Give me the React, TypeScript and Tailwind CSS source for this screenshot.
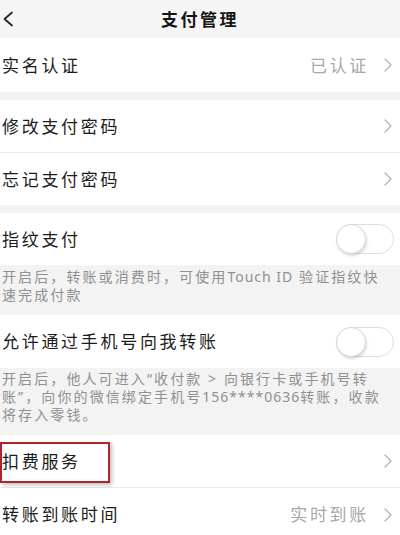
import React from "react";

const Chevron = () => (
  <svg width="8" height="14" viewBox="0 0 8 14" fill="none" className="shrink-0">
    <path d="M1 1 L7 7 L1 13" stroke="#b4b4b4" strokeWidth="1.3" strokeLinecap="round" strokeLinejoin="round" />
  </svg>
);

const Toggle = () => (
  <div className="w-[58px] h-[30px] rounded-full border border-[#dedede] bg-white flex items-center">
    <div className="w-[30px] h-[30px] -ml-px rounded-full bg-white border border-[#d8d8d8] shadow-[1px_2px_3px_rgba(0,0,0,0.15)]" />
  </div>
);

function Row({
  label,
  value,
  chevron = true,
  toggle = false,
  h = "h-[53px]",
  divider = false,
  children,
}: {
  label: string;
  value?: string;
  chevron?: boolean;
  toggle?: boolean;
  h?: string;
  divider?: boolean;
  children?: React.ReactNode;
}) {
  return (
    <div
      className={`${h} relative bg-white flex items-center justify-between pl-[2px] ${toggle ? "pr-[6px]" : "pr-[8px]"} ${divider ? "border-b border-[#e9e9e9]" : ""}`}
    >
      {children}
      <span className="text-[17px] tracking-[2.7px] text-[#1c1c1c] leading-none">{label}</span>
      <div className="flex items-center gap-[15px]">
        {value && <span className="text-[17px] tracking-[2.7px] text-[#a8a8a8] leading-none">{value}</span>}
        {toggle ? <Toggle /> : chevron && <Chevron />}
      </div>
    </div>
  );
}

const Lat = ({ children }: { children: React.ReactNode }) => (
  <span className="tracking-[1px]">{children}</span>
);

export default function App() {
  return (
    <div
      className="w-[400px] h-[535px] overflow-hidden bg-[#f3f3f3]"
      style={{ fontFamily: '"Noto Sans", "Noto Sans CJK SC", sans-serif' }}
    >
      <div className="h-[38px] bg-[#f5f5f5] grid grid-cols-[1fr_auto_1fr] items-center">
        <div className="pl-[2px] flex items-center">
          <svg width="12" height="16" viewBox="0 0 12 16" fill="none">
            <path d="M10 1.5 L2.5 8 L10 14.5" stroke="#222" strokeWidth="1.7" strokeLinecap="round" strokeLinejoin="round" />
          </svg>
        </div>
        <span className="text-[17px] font-bold tracking-[2.5px] text-[#151515] leading-none">支付管理</span>
        <div />
      </div>

      <Row label="实名认证" value="已认证" h="h-[54px]" />
      <div className="h-[8px]" />
      <Row label="修改支付密码" divider />
      <Row label="忘记支付密码" h="h-[52px]" />
      <div className="h-[8px]" />
      <Row label="指纹支付" toggle h="h-[52px]" />
      <div className="h-[50px] pt-[3px] pl-[2px] text-[14px] leading-[18px] tracking-[2.1px] text-[#909090] whitespace-nowrap">
        <div>
          开启后，转账或消费时，可使用<Lat>Touch ID</Lat> 验证指纹快
        </div>
        <div>速完成付款</div>
      </div>
      <Row label="允许通过手机号向我转账" toggle />
      <div className="h-[67px] pt-[2px] pl-[2px] text-[14px] leading-[18px] tracking-[2.1px] text-[#909090] whitespace-nowrap">
        <div>开启后，他人可进入“收付款 &gt; 向银行卡或手机号转</div>
        <div>
          账”，向你的微信绑定手机号<Lat>156****0636</Lat>转账，收款
        </div>
        <div>将存入零钱。</div>
      </div>
      <Row label="扣费服务" divider>
        <div className="absolute left-0 top-[7px] w-[110px] h-[41px] border-2 border-[#b0252b] shadow-[2px_2px_4px_rgba(0,0,0,0.25)] pointer-events-none" />
      </Row>
      <Row label="转账到账时间" value="实时到账" />
    </div>
  );
}
